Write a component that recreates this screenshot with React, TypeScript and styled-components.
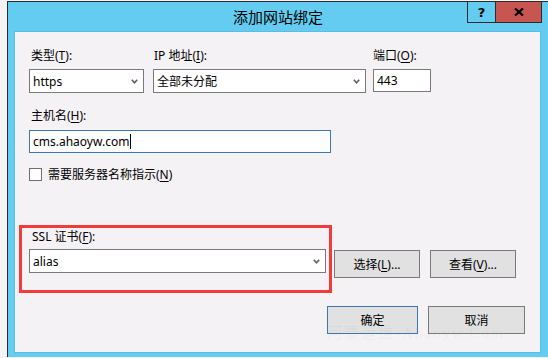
import React from "react";
import styled, { createGlobalStyle } from "styled-components";

const GlobalStyle = createGlobalStyle`
  html, body {
    margin: 0;
    padding: 0;
  }

  body {
    width: 548px;
    height: 358px;
    overflow: hidden;
    background: #f4f4f6;
    font-family: "Noto Sans", "Noto Sans CJK SC", sans-serif;
    color: #000000;
  }
`;

const Page = styled.div`
  --frameBlue: #64ccf0;
  --dialogGrey: #f5f2f6;
  --controlBorder: #7a7a7a;
  --focusBlue: #3a78b5;
  --buttonGrey: #e1e1e1;
  --closeRed: #c75550;

  box-sizing: border-box;
  padding: 1px 0 0 7px;
`;

const Window = styled.div`
  box-sizing: border-box;
  width: 541px;
  height: 356px;
  display: flex;
  flex-direction: column;

  background: var(--frameBlue);
  border-left: 1px solid #2b2b2b;
  border-top: 1px solid #2b2b2b;
`;

const TitleBar = styled.div`
  height: 30px;
  display: grid;
  grid-template-columns: 1fr auto 1fr;
  align-items: start;
`;

const Title = styled.div`
  grid-column: 2;
  font-size: 15px;
  line-height: 30px;
  color: #000000;
`;

const CaptionButtons = styled.div`
  grid-column: 3;
  justify-self: end;
  display: flex;
  margin-right: 6px;
`;

const Caption = styled.div<{ $close?: boolean }>`
  box-sizing: border-box;
  width: ${(p) => (p.$close ? "46px" : "29px")};
  height: 21px;
  display: flex;
  align-items: center;
  justify-content: center;

  background: ${(p) => (p.$close ? "var(--closeRed)" : "transparent")};
  border: 1px solid #2b2b2b;
  border-top: none;
  border-left: ${(p) => (p.$close ? "none" : "1px solid #2b2b2b")};

  font-size: 13px;
  font-weight: 700;
  font-family: "DejaVu Sans", sans-serif;
`;

const Client = styled.div`
  position: relative;
  box-sizing: border-box;
  height: 320px;
  margin: 0 8px 0 7px;
  padding: 16px 0 0 14px;
  display: flex;
  flex-direction: column;

  background: var(--dialogGrey);
  box-shadow: 0 0 0 1px #5cbde2;
`;

const Row = styled.div`
  display: flex;
  align-items: flex-start;
`;

const Field = styled.div<{ $w: number; $gap?: number }>`
  width: ${(p) => p.$w}px;
  margin-left: ${(p) => p.$gap ?? 0}px;
  display: flex;
  flex-direction: column;
`;

const Label = styled.div<{ $indent?: number }>`
  height: 16px;
  line-height: 16px;
  font-size: 12px;
  padding-left: ${(p) => p.$indent ?? 2}px;
  white-space: nowrap;
`;

const Key = styled.span`
  text-decoration: underline;
  text-underline-offset: 2px;
`;

const Select = styled.div<{ $top?: number }>`
  box-sizing: border-box;
  height: 24px;
  margin-top: ${(p) => p.$top ?? 5}px;
  padding: 0 5px 0 3px;
  display: flex;
  align-items: center;
  justify-content: space-between;

  background: #ffffff;
  border: 1px solid var(--controlBorder);
  font-size: 12px;
`;

const TextBox = styled.div<{ $focus?: boolean; $h: number; $top: number }>`
  box-sizing: border-box;
  height: ${(p) => p.$h}px;
  margin-top: ${(p) => p.$top}px;
  padding-left: 3px;
  display: flex;
  align-items: center;

  background: #ffffff;
  border: 1px solid
    ${(p) => (p.$focus ? "var(--focusBlue)" : "var(--controlBorder)")};
  font-size: 12px;
`;

const Caret = styled.span`
  display: inline-block;
  width: 1px;
  height: 15px;
  margin-left: 1px;
  background: #000000;
`;

const HostBlock = styled.div`
  width: 302px;
  margin-top: 15px;
  display: flex;
  flex-direction: column;
`;

const CheckRow = styled.label`
  height: 16px;
  margin-top: 13px;
  display: flex;
  align-items: center;
  gap: 6px;
  font-size: 12px;
`;

const CheckBox = styled.span`
  box-sizing: border-box;
  width: 13px;
  height: 13px;
  background: #ffffff;
  border: 1px solid #707070;
`;

const SslRow = styled.div`
  margin: 43px 0 0 -10px;
  display: flex;
  align-items: flex-start;
`;

const Highlight = styled.div`
  box-sizing: border-box;
  width: 313px;
  padding: 1px 3px 17px 7px;
  display: flex;
  flex-direction: column;

  border: 3px solid #f23b3b;
`;

const SideButtons = styled.div`
  margin: 25px 0 0 2px;
  display: flex;
  gap: 10px;
`;

const Button = styled.button<{ $w: number; $default?: boolean }>`
  box-sizing: border-box;
  width: ${(p) => p.$w}px;
  height: 28px;
  padding: 0;

  background: var(--buttonGrey);
  border: 1px solid
    ${(p) => (p.$default ? "var(--focusBlue)" : "var(--controlBorder)")};
  border-radius: 0;

  font-family: "Noto Sans", "Noto Sans CJK SC", sans-serif;
  font-size: 12px;
  color: #000000;
`;

const Footer = styled.div`
  margin-top: auto;
  padding: 0 15px 18px 0;
  display: flex;
  justify-content: flex-end;
  gap: 10px;
`;

/* faint site watermark stamped over the lower right corner */
const Watermark = styled.div`
  position: absolute;
  left: 312px;
  top: 289px;
  font-family: "Liberation Serif", "Noto Sans CJK SC", serif;
  font-size: 15px;
  letter-spacing: 2px;
  color: rgba(150, 150, 160, 0.1);
  white-space: nowrap;
  pointer-events: none;
`;

function Chevron() {
  return (
    <svg width="7" height="5" viewBox="0 0 7 5">
      <path d="M0.8 0.8L3.5 3.8L6.2 0.8" fill="none" stroke="#5f5f5f" strokeWidth="1.6" />
    </svg>
  );
}

function CloseGlyph() {
  return (
    <svg width="10" height="8" viewBox="0 0 10 8">
      <path d="M1 0.5L9 7.5M9 0.5L1 7.5" stroke="#000000" strokeWidth="2.2" />
    </svg>
  );
}

export default function App(): React.ReactElement {
  return (
    <Page>
      <GlobalStyle />
      <Window>
        <TitleBar>
          <Title>添加网站绑定</Title>
          <CaptionButtons>
            <Caption>?</Caption>
            <Caption $close>
              <CloseGlyph />
            </Caption>
          </CaptionButtons>
        </TitleBar>

        <Client>
          <Row>
            <Field $w={115}>
              <Label>
                类型(<Key>T</Key>):
              </Label>
              <Select>
                <span>https</span>
                <Chevron />
              </Select>
            </Field>
            <Field $w={213} $gap={9}>
              <Label $indent={1}>
                IP 地址(<Key>I</Key>):
              </Label>
              <Select>
                <span>全部未分配</span>
                <Chevron />
              </Select>
            </Field>
            <Field $w={58} $gap={7}>
              <Label $indent={0}>
                端口(<Key>O</Key>):
              </Label>
              <TextBox $h={23} $top={5}>
                443
              </TextBox>
            </Field>
          </Row>

          <HostBlock>
            <Label>
              主机名(<Key>H</Key>):
            </Label>
            <TextBox $focus $h={23} $top={6}>
              cms.ahaoyw.com
              <Caret />
            </TextBox>
          </HostBlock>

          <CheckRow>
            <CheckBox />
            <span>
              需要服务器名称指示(<Key>N</Key>)
            </span>
          </CheckRow>

          <SslRow>
            <Highlight>
              <Label $indent={3}>
                SSL 证书(<Key>F</Key>):
              </Label>
              <Select $top={4}>
                <span>alias</span>
                <Chevron />
              </Select>
            </Highlight>
            <SideButtons>
              <Button $w={86}>
                选择(<Key>L</Key>)...
              </Button>
              <Button $w={86}>
                查看(<Key>V</Key>)...
              </Button>
            </SideButtons>
          </SslRow>

          <Footer>
            <Button $w={91} $default>
              确定
            </Button>
            <Button $w={97}>取消</Button>
          </Footer>

          <Watermark>阿豪运维-Ahaoyw.Com</Watermark>
        </Client>
      </Window>
    </Page>
  );
}
